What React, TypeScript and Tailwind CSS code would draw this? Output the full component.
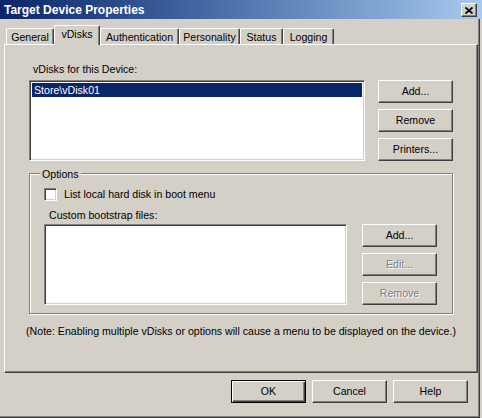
import React from "react";

const raised =
  "border border-t-white border-l-white border-r-[#404040] border-b-[#404040] shadow-[inset_-1px_-1px_#808080]";
const sunken =
  "border border-t-[#808080] border-l-[#808080] border-r-white border-b-white shadow-[inset_1px_1px_#404040,inset_-1px_-1px_#d4d0c8]";

function Btn({ label, disabled, def }: { label: string; disabled?: boolean; def?: boolean }) {
  const frame = def
    ? "border border-black shadow-[inset_1px_1px_#fff,inset_-1px_-1px_#404040,inset_-2px_-2px_#808080]"
    : raised;
  return (
    <div
      className={`${frame} w-[75px] h-[23px] flex items-center justify-center leading-[13px] bg-[#d4d0c8] ${
        disabled ? "text-[#808080] [text-shadow:1px_1px_0_#fff]" : "text-black"
      }`}
    >
      {label}
    </div>
  );
}

function Tab({ label, w, selected }: { label: string; w: string; selected?: boolean }) {
  if (selected) {
    return (
      <div
        className={`relative z-10 -mb-px h-[20px] ${w} bg-[#d4d0c8] border-l border-t border-r border-l-white border-t-white border-r-[#404040] shadow-[inset_-1px_0_#808080] rounded-t-[2px] text-center pt-[2px] leading-[13px]`}
      >
        {label}
      </div>
    );
  }
  return (
    <div
      className={`h-[16px] ${w} border-l border-t border-r border-l-white border-t-white border-r-[#404040] shadow-[inset_-1px_0_#808080] rounded-t-[2px] text-center pt-[2px] leading-[13px]`}
    >
      {label}
    </div>
  );
}

export default function App() {
  return (
    <div className="w-[482px] h-[418px] bg-[#d4d0c8] overflow-hidden font-['Liberation_Sans',Arial,sans-serif] text-[10.6px] text-black">
      {/* Title bar */}
      <div className="h-[19px] flex items-start bg-gradient-to-r from-[#0a246a] to-[#a6caf0]">
        <div className="flex-1 pl-[4px] pt-[2px] leading-[17px] text-[12px] font-bold text-white whitespace-nowrap">
          Target Device Properties
        </div>
        <div className={`${raised} mt-[3px] mr-[5px] w-[16px] h-[14px] bg-[#d4d0c8] flex items-center justify-center`}>
          <svg width="8" height="7" viewBox="0 0 8 7">
            <path d="M0.5 0.5 L7.5 6.5 M7.5 0.5 L0.5 6.5" stroke="#000" strokeWidth="1.7" fill="none" />
          </svg>
        </div>
      </div>

      {/* Body */}
      <div className="w-[480px] h-[399px] pl-[4px] border-r border-b border-r-[#404040] border-b-[#404040] shadow-[inset_-1px_-1px_#808080] flex flex-col">
        {/* Tabs */}
        <div className="mt-[6px] h-[19px] ml-[2px] flex items-end">
          <Tab label="General" w="w-[48px]" />
          <Tab label="vDisks" w="w-[46px]" selected />
          <Tab label="Authentication" w="w-[79px]" />
          <Tab label="Personality" w="w-[61px]" />
          <Tab label="Status" w="w-[43px]" />
          <Tab label="Logging" w="w-[51px]" />
        </div>

        {/* Panel */}
        <div className="w-[474px] h-[329px] border border-l-white border-t-white border-r-[#404040] border-b-[#404040] shadow-[inset_-1px_-1px_#808080]">
          <div className="pl-[24px] pt-[18px]">
            <div className="ml-[4px] h-[13px] leading-[13px]">vDisks for this Device:</div>
            <div className="mt-[4px] flex gap-[13px]">
              <div className={`${sunken} w-[336px] h-[81px] bg-white p-[2px]`}>
                <div className="h-[14px] bg-[#0a246a] text-white pl-[2px] leading-[14px]">Store\vDisk01</div>
              </div>
              <div className="flex flex-col gap-[6px]">
                <Btn label="Add..." />
                <Btn label="Remove" />
                <Btn label="Printers..." />
              </div>
            </div>

            {/* Options group */}
            <div className="relative mt-[12px] w-[424px] h-[141px] border border-[#808080] shadow-[inset_1px_1px_#fff,1px_1px_#fff] pl-[14px] pt-[14px]">
              <span className="absolute left-[10px] -top-[6px] px-[2px] bg-[#d4d0c8] leading-[13px]">Options</span>
              <div className="flex items-center gap-[7px]">
                <div className={`${sunken} w-[13px] h-[13px] bg-white`} />
                <span className="leading-[13px]">List local hard disk in boot menu</span>
              </div>
              <div className="mt-[8px] ml-[5px] h-[13px] leading-[13px]">Custom bootstrap files:</div>
              <div className="mt-[2px] flex gap-[15px]">
                <div className={`${sunken} w-[303px] h-[81px] bg-white`} />
                <div className="flex flex-col gap-[6px]">
                  <Btn label="Add..." />
                  <Btn label="Edit..." disabled />
                  <Btn label="Remove" disabled />
                </div>
              </div>
            </div>
          </div>
          <div className="mt-[11px] text-center leading-[13px] whitespace-nowrap">
            (Note: Enabling multiple vDisks or options will cause a menu to be displayed on the device.)
          </div>
        </div>

        {/* Bottom buttons */}
        <div className="mt-[7px] pr-[11px] flex justify-end gap-[6px]">
          <Btn label="OK" def />
          <Btn label="Cancel" />
          <Btn label="Help" />
        </div>
      </div>
    </div>
  );
}
